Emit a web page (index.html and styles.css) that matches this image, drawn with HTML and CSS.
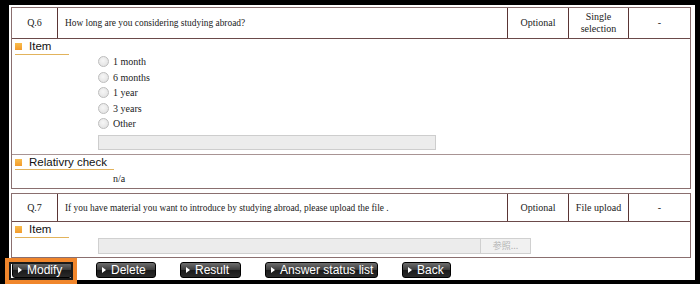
FILE: index.html
```html
<!DOCTYPE html>
<html>
<head>
<meta charset="utf-8">
<link rel="stylesheet" href="styles.css">
</head>
<body>
<div class="page">
  <div class="q">
    <div class="qhead tall">
      <div class="c num">Q.6</div>
      <div class="c text">How long are you considering studying abroad?</div>
      <div class="c mid">Optional</div>
      <div class="c mid">Single<br>selection</div>
      <div class="c mid last">-</div>
    </div>
    <div class="sec sec-item">
      <div class="lbl"><span class="sq"></span>Item</div>
      <ul class="opts">
        <li><span class="radio"></span>1 month</li>
        <li><span class="radio"></span>6 months</li>
        <li><span class="radio"></span>1 year</li>
        <li><span class="radio"></span>3 years</li>
        <li><span class="radio"></span>Other</li>
      </ul>
      <div class="txtbox"></div>
    </div>
    <div class="sec sec-rel">
      <div class="lbl"><span class="sq"></span>Relativry check</div>
      <div class="na">n/a</div>
    </div>
  </div>

  <div class="q q7">
    <div class="qhead">
      <div class="c num">Q.7</div>
      <div class="c text">If you have material you want to introduce by studying abroad, please upload the file .</div>
      <div class="c mid">Optional</div>
      <div class="c mid">File upload</div>
      <div class="c mid last">-</div>
    </div>
    <div class="sec sec-file">
      <div class="lbl"><span class="sq"></span>Item</div>
      <div class="filerow">
        <div class="filebox"></div>
        <div class="filebtn">参照...</div>
      </div>
    </div>
  </div>

  <div class="btns">
    <span class="btn btn-modify hl"><span class="tri"></span>Modify</span>
    <span class="btn btn-delete"><span class="tri"></span>Delete</span>
    <span class="btn btn-result"><span class="tri"></span>Result</span>
    <span class="btn btn-status"><span class="tri"></span>Answer status list</span>
    <span class="btn btn-back"><span class="tri"></span>Back</span>
  </div>
</div>
</body>
</html>
```

FILE: styles.css
```css
html, body {
  margin: 0;
  padding: 0;
}
body {
  background: #000;
  width: 700px;
  height: 284px;
  overflow: hidden;
  font-family: "Liberation Serif", "Times New Roman", serif;
  color: #222;
}
.page {
  box-sizing: border-box;
  margin: 5px 0 0 9px;
  width: 686px;
  height: 275px;
  background: #fff;
  padding: 2px 4px 0 2px;
}
.q {
  width: 680px;
  box-sizing: border-box;
  border: 1px solid #8a6f6f;
}
.q7 {
  margin-top: 4px;
}
.qhead {
  display: grid;
  grid-template-columns: 46px 450px 61px 60px 61px;
  border-bottom: 1px solid #6b4a4a;
}
.c {
  box-sizing: border-box;
  min-height: 27px;
  padding: 3px 4px;
  line-height: 12px;
  font-size: 10px;
  display: flex;
  align-items: center;
  border-right: 1px solid #5a3535;
}
.c.text {
  font-size: 9.4px;
  padding-left: 7px;
}
.tall .c {
  min-height: 30px;
}
.c.last {
  border-right: none;
}
.c.num, .c.mid {
  justify-content: center;
  text-align: center;
}
.sec {
  box-sizing: border-box;
}
.sec-item {
  height: 115px;
  padding-top: 1px;
}
.sec-rel {
  height: 34px;
  border-top: 1px solid #a89494;
  padding-top: 1px;
}
.sec-file {
  height: 35px;
  padding-top: 1px;
}
.lbl {
  box-sizing: border-box;
  margin-left: 3px;
  min-width: 54px;
  width: fit-content;
  height: 15px;
  padding: 0 7px 0 14px;
  position: relative;
  font-family: "Liberation Sans", Arial, sans-serif;
  font-size: 11.5px;
  line-height: 13px;
  color: #111;
  border-bottom: 1px solid #e2b35c;
}
.sec-rel .lbl {
  height: 14px;
  line-height: 12px;
}
.sq {
  position: absolute;
  left: 0;
  top: 3px;
  width: 7px;
  height: 7px;
  background: linear-gradient(#f9bd4c, #f39a2c);
}
.opts {
  list-style: none;
  margin: -1px 0 0 86px;
  padding: 0;
}
.opts li {
  height: 15.5px;
  display: flex;
  align-items: center;
  font-size: 10px;
}
.radio {
  box-sizing: border-box;
  width: 11px;
  height: 11px;
  border-radius: 50%;
  border: 1px solid #bdbdbd;
  background: radial-gradient(circle at 45% 40%, #f6f6f6, #dedede);
  margin-right: 4px;
}
.txtbox {
  box-sizing: border-box;
  margin: 3.5px 0 0 86px;
  width: 338px;
  height: 15px;
  background: #ececec;
  border: 1px solid #cdcdcd;
}
.na {
  margin-left: 101px;
  height: 18px;
  line-height: 18px;
  font-size: 10px;
}
.filerow {
  display: flex;
  margin-left: 86px;
  height: 16px;
}
.filebox {
  box-sizing: border-box;
  width: 382px;
  height: 16px;
  background: #ececec;
  border: 1px solid #d0d0d0;
  border-right: none;
}
.filebtn {
  box-sizing: border-box;
  width: 51px;
  height: 16px;
  background: #f1f1f1;
  border: 1px solid #d0d0d0;
  color: #b4b4b4;
  font-family: "Noto Sans CJK JP", sans-serif;
  font-size: 9px;
  line-height: 14px;
  text-align: center;
}
.btns {
  display: flex;
  gap: 24px;
  margin: 4px 0 0 1px;
}
.btn {
  box-sizing: border-box;
  height: 16px;
  display: flex;
  align-items: center;
  padding-left: 5px;
  border: 1px solid #000;
  border-radius: 3px;
  background: linear-gradient(#6e6e6e, #3a3a3a 50%, #1a1a1a 51%, #2a2a2a);
  color: #fff;
  font-family: "Liberation Sans", Arial, sans-serif;
  font-size: 12px;
  line-height: 14px;
}
.tri {
  width: 0;
  height: 0;
  border-left: 4px solid #fff;
  border-top: 3px solid transparent;
  border-bottom: 3px solid transparent;
  margin-right: 5px;
}
.btn-modify { width: 60px; }
.btn-delete { width: 60px; }
.btn-result { width: 61px; }
.btn-status { width: 113px; }
.btn-back { width: 49px; }
.hl {
  position: relative;
}
.hl::after {
  content: "";
  position: absolute;
  left: -8px;
  right: -6px;
  top: -5px;
  bottom: -7px;
  border: 4px solid #f0862c;
  box-shadow: inset 0 0 0 2px #1a1a1a;
  pointer-events: none;
}
```
